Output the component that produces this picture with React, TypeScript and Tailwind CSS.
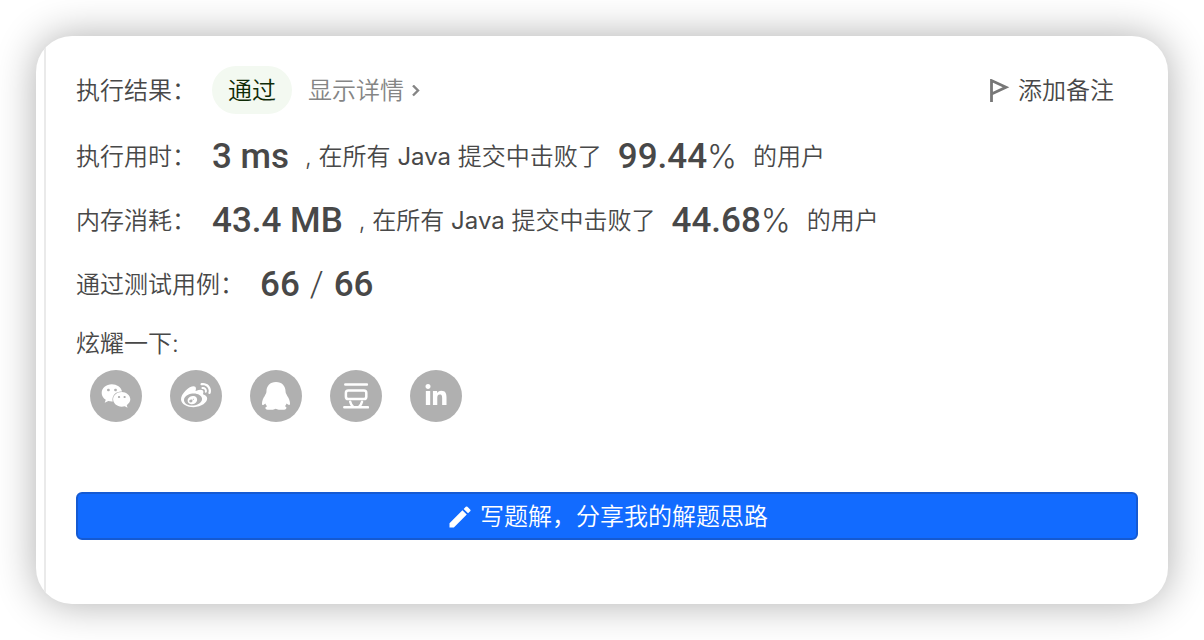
import type { ReactNode } from "react";
import { FaLinkedinIn, FaWeibo, FaWeixin } from "react-icons/fa";
import { MdEdit } from "react-icons/md";

function Percent({ value }: { value: string }) {
  return (
    <span className="flex items-baseline px-4 font-[Roboto] text-[35px] leading-10">
      <span className="font-medium">{value}</span>
      <span className="font-[Inter] text-[32px] font-light">%</span>
    </span>
  );
}

function Row({ label, children }: { label: string; children: ReactNode }) {
  return (
    <div className="flex h-16 items-center pt-0.5 whitespace-nowrap">
      <span className="mr-4">{label}</span>
      {children}
    </div>
  );
}

function Metric({ label, value, percent }: { label: string; value: string; percent: string }) {
  return (
    <Row label={label}>
      <strong className="mr-4 font-[Roboto] text-[35px] leading-10 font-medium">{value}</strong>
      <span>
        , 在所有 <span className="font-normal">Java</span> 提交中击败了
      </span>
      <Percent value={percent} />
      <span>的用户</span>
    </Row>
  );
}

function DoubanIcon() {
  return (
    <svg viewBox="0 0 26 26" className="size-[26px]" fill="none" stroke="currentColor" strokeWidth="2.5" strokeLinecap="round" aria-hidden="true">
      <path d="M2.3 1.6h21.6M1.3 24.2h23.6M7.2 18.8Q8 22 10 23.8M19 18.8Q18.2 22 16.2 23.8" />
      <rect x="2.9" y="7.5" width="20.4" height="8.6" rx="2.4" />
    </svg>
  );
}

function QqIcon() {
  return (
    <svg viewBox="0 0 82 82" className="size-[28px]" fill="currentColor" aria-hidden="true">
      <path d="M41 0C23 0 13 12 13 28C13 33 10 36 8 41C3 48 0 56 0 63C0 68 2 69 6 66L10 63C11 67 13 69 15 71C10 73 9 76 11 79C17 83 32 82 40 78C49 82 64 83 70 79C73 76 72 73 67 71C69 69 71 66 72 63L76 66C80 69 82 67 82 63C82 56 79 48 74 41C72 36 69 33 69 28C69 12 59 0 41 0Z" />
    </svg>
  );
}

const shares: { name: string; icon: ReactNode }[] = [
  { name: "微信", icon: <FaWeixin className="size-[30px]" /> },
  { name: "微博", icon: <FaWeibo className="size-[30px]" /> },
  { name: "QQ", icon: <QqIcon /> },
  { name: "豆瓣", icon: <DoubanIcon /> },
  { name: "领英", icon: <FaLinkedinIn className="size-[24px]" /> },
];

export default function App() {
  return (
    <div className="bg-white p-9 font-[Inter,'Noto_Sans_CJK_SC',sans-serif] text-2xl font-[350] text-[#484848]">
      <main className="overflow-hidden rounded-[36px] bg-white pl-2 shadow-[0_0_40px_rgba(0,0,0,0.32)]">
        <div className="border-l-2 border-[#eaeaea] pt-[30px] pr-[30px] pb-16 pl-[30px]">
          <header className="mb-[10px] flex h-12 items-center justify-between">
            <div className="flex items-center whitespace-nowrap">
              <span className="mt-0.5 mr-4">执行结果：</span>
              <span className="mr-4 flex h-12 items-center rounded-full bg-[#f3f9f1] px-4 pt-0.5 text-[#0f2b06]">通过</span>
              <a href="#details" className="flex items-center gap-2 pt-0.5 text-[#858585]">
                显示详情
                <svg viewBox="0 0 8 12" className="h-3 w-2" fill="none" stroke="currentColor" strokeWidth="2.4" aria-hidden="true">
                  <path d="M1 0.5l5 5-5 5" />
                </svg>
              </a>
            </div>
            <button type="button" className="mr-6 flex items-center gap-2 pt-0.5">
              <svg viewBox="0 0 20 24" className="h-6 w-5 text-[#777]" fill="none" stroke="currentColor" strokeWidth="2.8" aria-hidden="true">
                <path d="M1.5 23V1.6L16 8.2L1.5 15" />
              </svg>
              添加备注
            </button>
          </header>

          <Metric label="执行用时：" value="3 ms" percent="99.44" />
          <Metric label="内存消耗：" value="43.4 MB" percent="44.68" />
          <Row label="通过测试用例：">
            <span className="flex gap-2.5 font-[Roboto] text-[35px] leading-10">
              <strong className="font-medium">66</strong>
              <span>/</span>
              <strong className="font-medium">66</strong>
            </span>
          </Row>

          <section>
            <h2 className="mt-3 leading-8">炫耀一下:</h2>
            <div className="mt-[10px] ml-[14px] flex gap-7">
              {shares.map((s) => (
                <button
                  key={s.name}
                  type="button"
                  aria-label={s.name}
                  className="flex size-[52px] items-center justify-center rounded-full bg-[#b0b0b0] text-white"
                >
                  {s.icon}
                </button>
              ))}
            </div>
          </section>

          <button
            type="button"
            className="mt-[70px] flex h-12 w-full items-center justify-center gap-1.5 rounded-md border-2 border-[#155ad2] bg-[#126bff] pt-0.5 text-white"
          >
            <MdEdit className="size-7" />
            写题解，分享我的解题思路
          </button>
        </div>
      </main>
    </div>
  );
}
